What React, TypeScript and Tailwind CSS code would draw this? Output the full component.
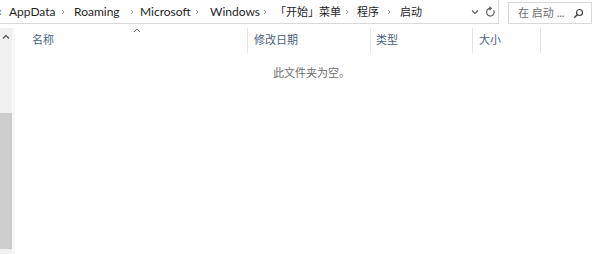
import React from "react";

// positions measured off the reference: crumb box width, gap after the previous chevron
const crumbs = [
  { label: "AppData", w: "w-[51px]", ml: "ml-0", size: "text-[12px]" },
  { label: "Roaming", w: "w-[55px]", ml: "ml-[8px]", size: "text-[12px]" },
  { label: "Microsoft", w: "w-[54px]", ml: "ml-[5px]", size: "text-[12px]" },
  { label: "Windows", w: "w-[52px]", ml: "ml-[10px]", size: "text-[12px]" },
  { label: "「开始」菜单", w: "w-[69px]", ml: "ml-[7px]", size: "text-[11px]" },
  { label: "程序", w: "w-[29px]", ml: "ml-[7px]", size: "text-[11px]" },
  { label: "启动", w: "w-[30px]", ml: "ml-[8px]", size: "text-[11px]" },
];

const columns = [
  { label: "名称", width: "w-[233px]", pad: "pl-[17px]" },
  { label: "修改日期", width: "w-[123px]", pad: "pl-[6px]" },
  { label: "类型", width: "w-[102px]", pad: "pl-[5px]" },
  { label: "大小", width: "w-[68px]", pad: "pl-[6px]" },
];

function Chevron() {
  return (
    <svg width="6" height="8" viewBox="0 0 6 8" className="shrink-0">
      <path d="M2 2L4 4L2 6" fill="none" stroke="#9a9a9a" strokeWidth="1" />
    </svg>
  );
}

export default function App() {
  return (
    <div
      className="w-[600px] h-[254px] bg-white overflow-hidden text-[11px] text-[#1e1e1e]"
      style={{ fontFamily: 'Lato, "Noto Sans CJK SC", sans-serif' }}
    >
      {/* Address bar + search */}
      <div className="flex h-[25px] items-start">
        <div className="w-[499px] h-[24px] border-b border-r border-[#d9d9d9] flex items-center">
          <div className="flex items-center flex-1 leading-none overflow-hidden">
            <span className="-ml-[2px] w-[11px] shrink-0 text-[13px] text-[#555]">‹</span>
            {crumbs.map((c, i) => (
              <React.Fragment key={c.label}>
                <span className={`${c.w} ${c.ml} ${c.size} shrink-0 whitespace-nowrap`}>{c.label}</span>
                {i < crumbs.length - 1 && <Chevron />}
              </React.Fragment>
            ))}
          </div>
          <svg width="10" height="8" viewBox="0 0 10 8" className="mr-[3px] shrink-0">
            <path d="M2 2.5L5 5.5L8 2.5" fill="none" stroke="#555" strokeWidth="1.1" />
          </svg>
          <div className="h-[24px] w-[14px] mr-[1px] flex items-center justify-center shrink-0">
            <svg width="11" height="12" viewBox="0 0 11 12">
              <path d="M8.6 4.2A3.8 3.8 0 1 1 5.5 2.4" fill="none" stroke="#555" strokeWidth="1.1" />
              <path d="M4.3 0.6L6.3 2.4L4.3 4.2" fill="none" stroke="#555" strokeWidth="1.1" />
            </svg>
          </div>
        </div>
        <div className="ml-[9px] mt-[2px] w-[84px] h-[22px] border border-[#d9d9d9] flex items-center pl-[9px] pr-[7px] text-[#6d6d6d]">
          <span className="flex-1 whitespace-nowrap text-[11px]">在 启动 ...</span>
          <svg width="11" height="11" viewBox="0 0 11 11" className="shrink-0">
            <circle cx="6.5" cy="4.5" r="3" fill="none" stroke="#444" strokeWidth="1.2" />
            <path d="M4.4 6.6L1.3 9.7" stroke="#444" strokeWidth="1.4" />
          </svg>
        </div>
      </div>

      {/* Body */}
      <div className="flex h-[229px] pt-[3px]">
        <div className="w-[12px] bg-[#f0f0f0] flex flex-col items-center shrink-0">
          <svg width="8" height="6" viewBox="0 0 8 6" className="mt-[6px]">
            <path d="M1 4.5L4 1.5L7 4.5" fill="none" stroke="#606060" strokeWidth="1.4" />
          </svg>
          <div className="w-full h-[136px] bg-[#cdcdcd] mt-[73px]" />
        </div>
        <div className="w-[3px] bg-[#f7f7f7] shrink-0" />
        <div className="flex-1">
          <div className="flex h-[25px] relative">
            {columns.map((c) => (
              <div
                key={c.label}
                className={`${c.width} ${c.pad} h-full border-r border-[#e5e5e5] flex items-center text-[#4c607a] whitespace-nowrap`}
              >
                {c.label}
              </div>
            ))}
            <svg width="8" height="5" viewBox="0 0 8 5" className="absolute left-[118px] top-[0px]">
              <path d="M1 4L4 1L7 4" fill="none" stroke="#888" strokeWidth="1" />
            </svg>
          </div>
          <div className="pl-[258px] pt-[12px] text-[#6d6d6d]">此文件夹为空。</div>
        </div>
      </div>
    </div>
  );
}
